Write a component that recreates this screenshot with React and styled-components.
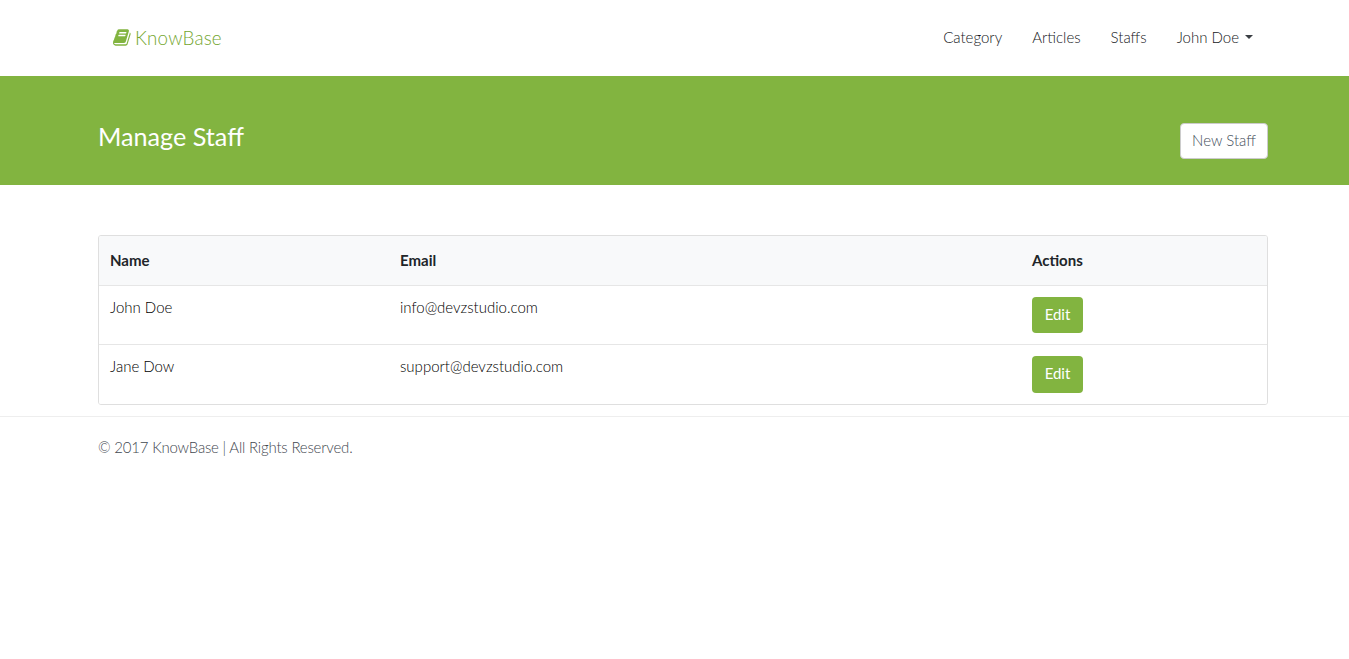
import React from 'react';
import styled, { createGlobalStyle } from 'styled-components';

const GREEN = '#82b440';

const GlobalStyle = createGlobalStyle`
    html, body {
        margin: 0;
        padding: 0;
        background: #fff;
        font-family: "Lato", "Open Sans", sans-serif;
        font-size: 15px;
        font-weight: 300;
        color: #000;
    }
`;

const Container = styled.div`
    width: 1170px;
    margin: 0 0 0 98px;
`;

const Navbar = styled.nav`
    height: 74px;
    padding-bottom: 2px;
    display: flex;
    align-items: center;
`;

const NavInner = styled(Container)`
    display: flex;
    align-items: center;
    justify-content: space-between;
`;

const Brand = styled.a`
    display: flex;
    align-items: center;
    gap: 3px;
    margin-left: 15px;
    color: #74a62f;
    font-size: 18.75px;
    letter-spacing: 0.2px;
`;

const NavList = styled.div`
    display: flex;
    gap: 30px;
    margin-right: 15px;
    color: #15181b;
`;

const NavLink = styled.a`
    display: flex;
    align-items: center;
`;

const Caret = styled.span`
    margin-left: 6px;
    width: 0;
    height: 0;
    border-top: 4px solid #3a3f44;
    border-left: 4px solid transparent;
    border-right: 4px solid transparent;
`;

const Hero = styled.header`
    height: 109px;
    background: ${GREEN};
`;

const HeroInner = styled(Container)`
    display: flex;
    justify-content: space-between;
    height: 100%;
`;

const Title = styled.h1`
    margin: 44px 0 0;
    font-size: 25.2px;
    font-weight: 400;
    line-height: 32px;
    color: #fff;
`;

const NewButton = styled.button`
    align-self: flex-start;
    margin-top: 47px;
    width: 88px;
    height: 36px;
    padding: 0 0 2px;
    background: #fff;
    border: 1px solid #ccc;
    border-radius: 4px;
    font: inherit;
    color: #3f4d59;
`;

const Main = styled(Container)`
    margin-top: 50px;
`;

const Card = styled.div`
    border: 1px solid #dfdfdf;
    border-radius: 3px;
    overflow: hidden;
`;

const Row = styled.div`
    display: grid;
    grid-template-columns: 290px 632px 1fr;
    height: ${p => p.$h}px;
    padding-left: 11px;
    background: ${p => (p.$head ? '#f8f9fa' : '#fff')};
    border-top: ${p => (p.$first ? 'none' : '1px solid #e6e6e6')};
`;

const Cell = styled.div`
    padding-top: 10px;
    line-height: 22px;
`;

const HeadCell = styled.div`
    font-weight: 700;
    line-height: 49px;
    color: #212529;
`;

const EditButton = styled.button`
    margin-top: 11px;
    width: 51px;
    height: ${p => p.$h}px;
    padding: 0 0 ${p => p.$h - 34}px;
    border: none;
    border-radius: 4px;
    background: ${GREEN};
    color: #fff;
    font: inherit;
    font-weight: 400;
`;

const Footer = styled.footer`
    margin-top: 11px;
    border-top: 1px solid #eee;
`;

const FooterText = styled(Container)`
    padding-top: 19px;
    line-height: 22px;
    color: #3f4850;
    letter-spacing: -0.2px;
`;

const BookIcon = () => (
    <svg width="19" height="19" viewBox="0 0 1792 1792" fill={GREEN}>
        <path d="M1639 478q40 57 18 129l-275 906q-19 64-76.500 107.500t-122.500 43.500h-923q-77 0-148.500-53.500t-99.500-131.500q-24-67-2-127 0-4 3-27t4-37q1-8-3-21.500t-3-19.500q2-11 8-21t16.500-23.500 16.500-23.500q23-38 45-91.500t30-91.500q3-10 .5-30t-.5-28q3-11 17-28t17-23q21-36 42-92t25-90q1-9-2.500-32t.5-28q4-13 22-30.500t22-22.500q19-26 42.500-84.500t27.500-96.500q1-8-3-25.500t-2-26.500q2-8 9-18t18-23 17-21q8-12 16.500-30.500t15-35 16-36 19.500-32 26.500-23.500 36-11.500 47.500 5.500l-1 3q38-9 51-9h761q74 0 114 56t18 130l-274 906q-36 119-71.500 153.500t-128.500 34.500h-869q-27 0-38 15-11 16-1 43 24 70 144 70h923q29 0 56-15.500t35-41.500l300-987q7-22 5-57 38 15 59 43zm-1064 2q-4 13 2 22.500t20 9.500h608q13 0 25.500-9.500t16.500-22.500l21-64q4-13-2-22.500t-20-9.500h-608q-13 0-25.500 9.500t-16.500 22.500zm-83 256q-4 13 2 22.500t20 9.500h608q13 0 25.500-9.500t16.500-22.500l21-64q4-13-2-22.500t-20-9.500h-608q-13 0-25.500 9.500t-16.500 22.500z" />
    </svg>
);

const staff = [
    { name: 'John Doe', email: 'info@devzstudio.com', h: 58 },
    { name: 'Jane Dow', email: 'support@devzstudio.com', h: 59 },
];

const App = () => (
    <>
        <GlobalStyle />
        <Navbar>
            <NavInner>
                <Brand><BookIcon />KnowBase</Brand>
                <NavList>
                    <NavLink>Category</NavLink>
                    <NavLink>Articles</NavLink>
                    <NavLink>Staffs</NavLink>
                    <NavLink>John Doe<Caret /></NavLink>
                </NavList>
            </NavInner>
        </Navbar>
        <Hero>
            <HeroInner>
                <Title>Manage Staff</Title>
                <NewButton>New Staff</NewButton>
            </HeroInner>
        </Hero>
        <Main>
            <Card>
                <Row $head $first $h={49}>
                    <HeadCell>Name</HeadCell>
                    <HeadCell>Email</HeadCell>
                    <HeadCell>Actions</HeadCell>
                </Row>
                {staff.map(s => (
                    <Row key={s.name} $h={s.h}>
                        <Cell>{s.name}</Cell>
                        <Cell>{s.email}</Cell>
                        <div><EditButton $h={s.h - 22}>Edit</EditButton></div>
                    </Row>
                ))}
            </Card>
        </Main>
        <Footer>
            <FooterText>© 2017 KnowBase | All Rights Reserved.</FooterText>
        </Footer>
    </>
);

export default App;
